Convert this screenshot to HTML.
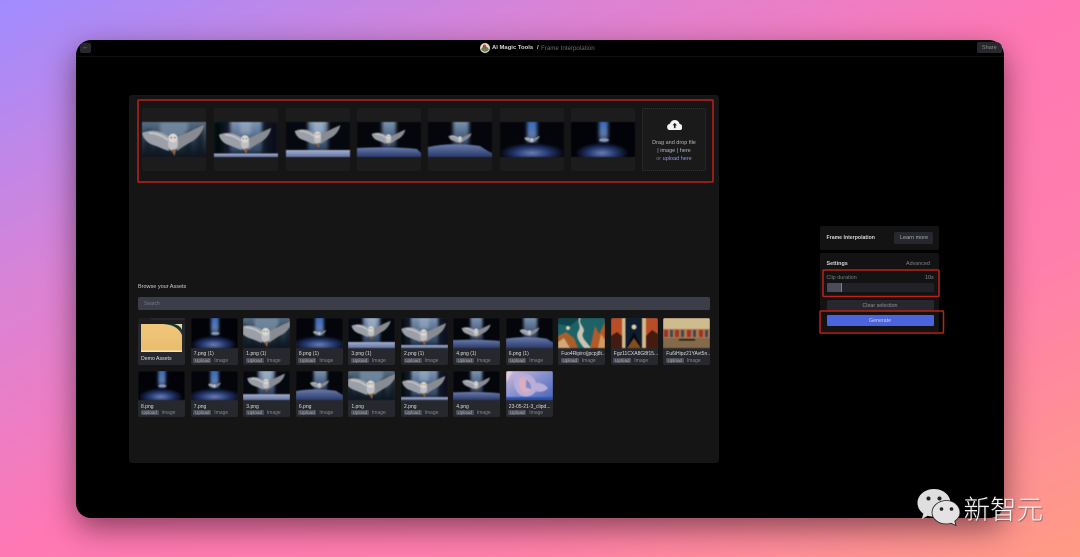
<!DOCTYPE html>
<html lang="zh">
<head>
<meta charset="utf-8">
<title>Frame Interpolation</title>
<style>
html,body{margin:0;padding:0}
body{width:1080px;height:557px;overflow:hidden;position:relative;font-family:"Liberation Sans","Noto Sans CJK SC",sans-serif;
background:linear-gradient(to bottom right,#a08cff 0,#d883d6 26%,#ff78b4 50%,#ff7fac 72%,#ff9c84 100%)}
div,span,svg{position:absolute;box-sizing:border-box}
.win{left:76px;top:40px;width:928px;height:478px;background:#000;border-radius:15px;box-shadow:0 10px 30px rgba(40,15,25,.55)}
.layer{left:0;top:0;width:1080px;height:557px;filter:blur(.3px)}
.t{white-space:nowrap;line-height:1;margin-top:1px}
.f{background:#1c1c1d;border-radius:2px;top:108px;width:64px;height:63px}
.f svg{left:0;top:14px;width:64px;height:35px;filter:blur(.6px) brightness(.92)}
.a{width:47px;height:47px;background:#26282d;border-radius:2px;overflow:hidden}
.a.r2{height:46px}
.a svg{left:0;top:0;width:47px;height:30px;filter:blur(.5px) brightness(.92)}
.a.r2 svg{height:29px}
.n{left:3px;top:32.5px;margin-top:1px;font-size:5px;color:#dcdde0;white-space:nowrap;line-height:1}
.u{left:2.5px;top:39.5px;width:18px;height:5px;border-radius:1px;background:#4b4e56;color:#a8aab0;font-size:4.6px;line-height:5px;text-align:center}
.a.r2 .u{top:38.8px}
.i{left:23.5px;top:40.500px;font-size:5px;color:#83858b;line-height:1}
.a.r2 .i{top:39.800px}
</style>
</head>
<body>
<svg width="0" height="0" style="left:0;top:0">
<defs>
<filter id="b2" x="-40%" y="-40%" width="180%" height="180%"><feGaussianBlur stdDeviation="1.600"/></filter>
<linearGradient id="col" x1="0" y1="0" x2="0" y2="1"><stop offset="0" stop-color="#93aed0"/><stop offset="1" stop-color="#2e4364"/></linearGradient>
<linearGradient id="colb" x1="0" y1="0" x2="0" y2="1"><stop offset="0" stop-color="#2f6ed8"/><stop offset=".6" stop-color="#6688bf"/><stop offset="1" stop-color="#1a2c4e"/></linearGradient>
<linearGradient id="snow" x1="0" y1="0" x2="0" y2="1"><stop offset="0" stop-color="#b4c0e0"/><stop offset="1" stop-color="#6b7cb2"/></linearGradient>
<linearGradient id="snow2" x1="0" y1="0" x2="0" y2="1"><stop offset="0" stop-color="#7486b8"/><stop offset="1" stop-color="#2c3f76"/></linearGradient>
<linearGradient id="bg1" x1="0" y1="0" x2="0" y2="1"><stop offset="0" stop-color="#5d778f"/><stop offset=".55" stop-color="#2a3c4e"/><stop offset="1" stop-color="#0f1723"/></linearGradient>
<radialGradient id="glow" cx=".5" cy=".5" r=".5"><stop offset="0" stop-color="#7488c0"/><stop offset=".55" stop-color="#253a78"/><stop offset="1" stop-color="#05080f"/></radialGradient>
<linearGradient id="fold" x1="0" y1="0" x2="0" y2="1"><stop offset="0" stop-color="#f0c67c"/><stop offset="1" stop-color="#e8bd6b"/></linearGradient>
<linearGradient id="fishbg" x1="0" y1="0" x2="1" y2="1"><stop offset="0" stop-color="#e5cdee"/><stop offset=".5" stop-color="#8f9ae0"/><stop offset="1" stop-color="#4a6cc8"/></linearGradient>

<symbol id="owl" viewBox="-32 -17 64 35" overflow="visible">
<path d="M-3 -2C-10 -7 -20 -11 -31 -6C-30 -1 -26 4 -20 6C-14 8 -8 11 -4 12Z" fill="#a9adb5"/>
<path d="M3 -2C10 -3 20 -10 31 -14C30 -8 26 -2 20 2C14 5 8 9 4 12Z" fill="#94989f"/>
<path d="M-24 -6C-17 -6 -10 -3 -5 1" stroke="#d6d8dc" stroke-width="2" fill="none"/>
<ellipse cx="0" cy="4" rx="5" ry="8.500" fill="#cfd1d7"/>
<path d="M-2 11L1.500 17L3.500 10Z" fill="#9a6a48"/>
<circle cx="0" cy="-1" r="4.500" fill="#ebecee"/>
<circle cx="-1.800" cy="-1.400" r=".9" fill="#b9842c"/><circle cx="1.800" cy="-1.400" r=".9" fill="#b9842c"/>
</symbol>

<symbol id="f1" viewBox="0 0 64 35" preserveAspectRatio="xMidYMid slice">
<rect width="64" height="35" fill="url(#bg1)"/>
<rect x="18" width="28" height="16" fill="#8aa3bc" opacity=".7" filter="url(#b2)"/>
<g fill="#0c131d" opacity=".6" filter="url(#b2)"><rect x="4" y="8" width="5" height="27"/><rect x="14" y="14" width="4" height="21"/><rect x="44" y="10" width="4" height="25"/><rect x="55" y="6" width="6" height="29"/></g>
<use href="#owl" x="-1" y="0" width="64" height="35"/>
</symbol>
<symbol id="f2" viewBox="0 0 64 35" preserveAspectRatio="xMidYMid slice">
<rect width="64" height="35" fill="#111927"/>
<rect x="16" y="-4" width="32" height="35" fill="url(#col)" filter="url(#b2)"/>
<rect width="8" height="32" fill="#06080e" filter="url(#b2)"/><rect x="56" width="8" height="32" fill="#0b101a" filter="url(#b2)"/>
<rect x="26" y="-3" width="11" height="15" fill="#b4c6df" opacity=".5" filter="url(#b2)"/>
<rect y="31.500" width="64" height="3.500" fill="url(#snow)"/>
<use href="#owl" x="4" y="3.500" width="54" height="29.500"/>
</symbol>
<symbol id="f3" viewBox="0 0 64 35" preserveAspectRatio="xMidYMid slice">
<rect width="64" height="35" fill="#060910"/>
<rect x="22" y="-4" width="20" height="33" fill="url(#col)" filter="url(#b2)"/>
<rect x="27" y="-3" width="11" height="15" fill="#c0d2e8" opacity=".6" filter="url(#b2)"/>
<rect y="28" width="64" height="7" fill="url(#snow)"/>
<use href="#owl" x="8" y="1" width="47" height="25.700"/>
</symbol>
<symbol id="f4" viewBox="0 0 64 35" preserveAspectRatio="xMidYMid slice">
<rect width="64" height="35" fill="#04070c"/>
<rect x="25" y="-4" width="14" height="30" fill="url(#col)" filter="url(#b2)"/>
<path d="M0 26C20 25 45 25 60 27L64 31V35H0Z" fill="url(#snow2)"/>
<use href="#owl" x="14" y="6" width="35" height="19"/>
</symbol>
<symbol id="f5" viewBox="0 0 64 35" preserveAspectRatio="xMidYMid slice">
<rect width="64" height="35" fill="#04060c"/>
<rect x="25" y="-4" width="16" height="28" fill="url(#col)" filter="url(#b2)"/>
<path d="M0 25C18 21 38 22 52 24L60 29L64 31V35H0Z" fill="url(#snow2)"/>
<use href="#owl" x="20" y="10" width="24" height="13"/>
</symbol>
<symbol id="f6" viewBox="0 0 64 35" preserveAspectRatio="xMidYMid slice">
<rect width="64" height="35" fill="#03050b"/>
<rect x="27" y="-4" width="10" height="28" fill="url(#colb)" filter="url(#b2)"/>
<ellipse cx="32" cy="31" rx="32" ry="10" fill="url(#glow)"/>
<use href="#owl" x="24" y="13" width="16" height="9"/>
</symbol>
<symbol id="f7" viewBox="0 0 64 35" preserveAspectRatio="xMidYMid slice">
<rect width="64" height="35" fill="#02030a"/>
<rect x="28" y="-4" width="9" height="26" fill="url(#colb)" filter="url(#b2)"/>
<ellipse cx="31" cy="31" rx="26" ry="10" fill="url(#glow)"/>
<ellipse cx="33" cy="18" rx="5" ry="1.800" fill="#96a5be"/>
</symbol>

<symbol id="folder" viewBox="0 0 47 47" preserveAspectRatio="none">
<rect width="47" height="47" fill="#26282d"/>
<path d="M0 0H12L14 2H47V6H0Z" fill="#1d1e21"/>
<rect x="3" y="6" width="41" height="28" fill="url(#fold)"/>
<path d="M25 6C35 6.500 41 10 44 17V6Z" fill="#123a34"/>
<path d="M36 6C40 7 43 9 44 12V6Z" fill="#e9d9a8"/>
<rect x="3" y="32.500" width="41" height="1.500" fill="#f6e4b8"/>
</symbol>
<symbol id="art1" viewBox="0 0 47 30" preserveAspectRatio="none">
<rect width="47" height="30" fill="#1f6a70"/>
<path d="M0 0H22L12 8L0 6Z" fill="#0f4a52"/>
<path d="M0 18L8 14L16 20L20 30H0Z" fill="#b8672e"/>
<path d="M0 24L6 20L12 30H0Z" fill="#e6b57e"/>
<path d="M32 30L37 8L41 16L47 4V30Z" fill="#c2632c"/>
<path d="M40 30L43 16L47 22V30Z" fill="#e6a76a"/>
<path d="M23 0C19 6 29 10 25 15C23 20 29 24 33 30L26 30C20 22 17 18 21 12C23 7 19 4 21 0Z" fill="#d9d6bf"/>
<circle cx="10" cy="10" r="2" fill="#eee0b6"/>
</symbol>
<symbol id="art2" viewBox="0 0 47 30" preserveAspectRatio="none">
<rect width="47" height="30" fill="#c9542a"/>
<path d="M0 30V18L6 14L11 18V30Z" fill="#4a1d12"/>
<path d="M35 30V18L41 12L47 16V30Z" fill="#4a1d12"/>
<rect x="14" width="18" height="30" fill="#101f35"/>
<path d="M15 30L23 14L31 30Z" fill="#090a10"/>
<path d="M16 30L23 20L30 30Z" fill="#c9742e" opacity=".7"/>
<circle cx="23" cy="9" r="2.500" fill="#efdfae"/>
<rect x="11" width="3.500" height="30" fill="#e3c998"/><rect x="31" width="4" height="30" fill="#e3c998"/>
</symbol>
<symbol id="art3" viewBox="0 0 47 30" preserveAspectRatio="none">
<rect width="47" height="30" fill="#e0cb9a"/>
<rect y="11" width="47" height="9" fill="#c48050"/>
<g fill="#a6392a"><rect x="1" y="12" width="4" height="7"/><rect x="12" y="12" width="4" height="7"/><rect x="24" y="12" width="4" height="7"/><rect x="36" y="12" width="4" height="7"/></g>
<g fill="#37526a"><rect x="7" y="12" width="3" height="7"/><rect x="18" y="12" width="3" height="7"/><rect x="30" y="12" width="3" height="7"/><rect x="42" y="12" width="3" height="7"/></g>
<rect y="20" width="47" height="10" fill="#8e7352"/>
<rect x="16" y="21" width="16" height="1.600" fill="#2c2018"/>
</symbol>
<symbol id="fish" viewBox="0 0 47 30" preserveAspectRatio="none">
<rect width="47" height="30" fill="url(#fishbg)"/>
<path d="M10 4C18 0 28 4 30 12C35 12 40 14 42 18C38 22 34 22 30 21C26 27 18 28 13 24C8 18 6 10 10 4Z" fill="#c9bdec"/>
<path d="M14 7C20 5 25 9 26 15C27 20 22 24 17 22C13 18 12 12 14 7Z" fill="#eebdd2"/>
<path d="M20 9C23 10 26 14 25 19L20 17Z" fill="#8597e4"/>
<path d="M0 0H7L0 12Z" fill="#f4dff2"/>
<rect y="27" width="47" height="3" fill="#2f59bc"/>
</symbol>
</defs>
</svg>

<div class="win"></div>
<div class="layer">
  <div style="left:76px;top:55.500px;width:928px;height:1px;background:#0e0e0f"></div>
  <div style="left:80px;top:42.500px;width:10.500px;height:10.500px;background:#26282c;border-radius:4px 2px 2px 2px"></div>
  <div class="t" style="left:82px;top:43.500px;font-size:6.500px;color:#8a8c90">←</div>
  <svg style="left:480px;top:43px;width:10px;height:10px" viewBox="0 0 9 9"><circle cx="4.500" cy="4.500" r="4.500" fill="#e6dccb"/><path d="M1 6C2 2 7 2 8 6C6 8.500 3 8.500 1 6Z" fill="#6b7a54"/><circle cx="4" cy="3" r="1.500" fill="#b34a30"/></svg>
  <div class="t" style="left:492px;top:44.500px;font-size:5.900px;font-weight:700;color:#d6d7d9">AI Magic Tools</div>
  <div class="t" style="left:537px;top:44.500px;font-size:5.900px;font-weight:700;color:#d6d7d9">/</div>
  <div class="t" style="left:541px;top:44.500px;font-size:6.200px;color:#6a6c70">Frame Interpolation</div>
  <div style="left:977px;top:42px;width:25px;height:11px;background:#26282c;border-radius:2px 6px 2px 2px"></div>
  <div class="t" style="left:982px;top:44.700px;font-size:5.500px;color:#8a8c91">Share</div>

  <div style="left:129px;top:95px;width:590px;height:368px;background:#151516;border-radius:3px"></div>

  <div class="f" style="left:142px"><svg><use href="#f1"/></svg></div>
  <div class="f" style="left:214px"><svg><use href="#f2"/></svg></div>
  <div class="f" style="left:285.500px"><svg><use href="#f3"/></svg></div>
  <div class="f" style="left:357px"><svg><use href="#f4"/></svg></div>
  <div class="f" style="left:428px"><svg><use href="#f5"/></svg></div>
  <div class="f" style="left:499.500px"><svg><use href="#f6"/></svg></div>
  <div class="f" style="left:571px"><svg><use href="#f7"/></svg></div>

  <div style="left:642px;top:108px;width:64px;height:63px;background:#1a1a1b;border:1px dotted #303032;border-radius:1px"></div>
  <svg style="left:666.500px;top:119.500px;width:15.500px;height:10.500px" viewBox="0 0 16 11"><path d="M4 11C1.500 11 0 9.300 0 7.300C0 5.500 1.200 4.200 3 3.900C3.700 1.600 5.700 0 8 0C10.500 0 12.500 1.700 13 4C14.800 4.300 16 5.600 16 7.400C16 9.400 14.500 11 12.300 11Z" fill="#f2f2f2"/><path d="M8 3L5.700 5.600H7.200V8.500H8.800V5.600H10.300Z" fill="#1a1a1b"/></svg>
  <div class="t" style="left:642px;top:140.200px;width:64px;text-align:center;font-size:5.500px;color:#b8b9bc">Drag and drop file</div>
  <div class="t" style="left:642px;top:147.500px;width:64px;text-align:center;font-size:5.500px;color:#b8b9bc">| image | here</div>
  <div class="t" style="left:642px;top:156.200px;width:64px;text-align:center;font-size:5.500px;color:#7b7d82">or <span style="position:static;color:#8f99ea">upload here</span></div>

  <div class="t" style="left:138px;top:284.300px;font-size:5.500px;color:#cccdd0">Browse your Assets</div>
  <div style="left:138px;top:297px;width:572px;height:13px;background:#3b3e49;border-radius:2px"></div>
  <div class="t" style="left:144px;top:300.800px;font-size:5px;color:#777a83">Search</div>

  <!-- row 1 -->
  <div class="a" style="left:138px;top:318px"><svg style="height:47px;filter:none"><use href="#folder"/></svg><div class="n" style="top:38.400px;font-size:5.200px">Demo Assets</div></div>
  <div class="a" style="left:190.800px;top:318px"><svg><use href="#f7"/></svg><div class="n">7.png (1)</div><div class="u">Upload</div><div class="i">Image</div></div>
  <div class="a" style="left:243.300px;top:318px"><svg><use href="#f1"/></svg><div class="n">1.png (1)</div><div class="u">Upload</div><div class="i">Image</div></div>
  <div class="a" style="left:295.900px;top:318px"><svg><use href="#f6"/></svg><div class="n">8.png (1)</div><div class="u">Upload</div><div class="i">Image</div></div>
  <div class="a" style="left:348.400px;top:318px"><svg><use href="#f3"/></svg><div class="n">3.png (1)</div><div class="u">Upload</div><div class="i">Image</div></div>
  <div class="a" style="left:401px;top:318px"><svg><use href="#f2"/></svg><div class="n">2.png (1)</div><div class="u">Upload</div><div class="i">Image</div></div>
  <div class="a" style="left:453.300px;top:318px"><svg><use href="#f4"/></svg><div class="n">4.png (1)</div><div class="u">Upload</div><div class="i">Image</div></div>
  <div class="a" style="left:505.800px;top:318px"><svg><use href="#f5"/></svg><div class="n">6.png (1)</div><div class="u">Upload</div><div class="i">Image</div></div>
  <div class="a" style="left:558.300px;top:318px"><svg><use href="#art1"/></svg><div class="n">Fuo4Ripiro(jpcpj8t...</div><div class="u">Upload</div><div class="i">Image</div></div>
  <div class="a" style="left:610.800px;top:318px"><svg><use href="#art2"/></svg><div class="n">Fgz11CXA8G8f15...</div><div class="u">Upload</div><div class="i">Image</div></div>
  <div class="a" style="left:663.300px;top:318px"><svg><use href="#art3"/></svg><div class="n">Fu6iHipz21YAvt5n...</div><div class="u">Upload</div><div class="i">Image</div></div>

  <!-- row 2 -->
  <div class="a r2" style="left:138px;top:371px"><svg><use href="#f7"/></svg><div class="n">8.png</div><div class="u">Upload</div><div class="i">Image</div></div>
  <div class="a r2" style="left:190.800px;top:371px"><svg><use href="#f6"/></svg><div class="n">7.png</div><div class="u">Upload</div><div class="i">Image</div></div>
  <div class="a r2" style="left:243.300px;top:371px"><svg><use href="#f3"/></svg><div class="n">3.png</div><div class="u">Upload</div><div class="i">Image</div></div>
  <div class="a r2" style="left:295.900px;top:371px"><svg><use href="#f5"/></svg><div class="n">6.png</div><div class="u">Upload</div><div class="i">Image</div></div>
  <div class="a r2" style="left:348.400px;top:371px"><svg><use href="#f1"/></svg><div class="n">1.png</div><div class="u">Upload</div><div class="i">Image</div></div>
  <div class="a r2" style="left:401px;top:371px"><svg><use href="#f2"/></svg><div class="n">2.png</div><div class="u">Upload</div><div class="i">Image</div></div>
  <div class="a r2" style="left:453.300px;top:371px"><svg><use href="#f4"/></svg><div class="n">4.png</div><div class="u">Upload</div><div class="i">Image</div></div>
  <div class="a r2" style="left:505.800px;top:371px"><svg><use href="#fish"/></svg><div class="n">23-05-21-3_clipd...</div><div class="u">Upload</div><div class="i">Image</div></div>

  <!-- right panel -->
  <div style="left:820px;top:226px;width:119px;height:24px;background:#131314;border-radius:2px"></div>
  <div class="t" style="left:826.500px;top:235.100px;font-size:5.200px;font-weight:700;color:#d4d5d7">Frame Interpolation</div>
  <div style="left:894px;top:232px;width:39px;height:12px;background:#26282d;border-radius:2px"></div>
  <div class="t" style="left:900px;top:235.200px;font-size:5.500px;color:#a8aaae">Learn more</div>

  <div style="left:820px;top:253px;width:119px;height:79px;background:#131314;border-radius:2px"></div>
  <div class="t" style="left:826.500px;top:261px;font-size:5.400px;font-weight:700;color:#d4d5d7">Settings</div>
  <div class="t" style="left:906px;top:261px;font-size:5.400px;color:#7f8186">Advanced</div>
  <div class="t" style="left:826.500px;top:275.300px;font-size:5.400px;color:#7a7c81">Clip duration</div>
  <div class="t" style="left:925px;top:275.300px;font-size:5.400px;color:#8a8c91">10s</div>
  <div style="left:826.500px;top:283px;width:107px;height:9px;background:#202227;border-radius:1px"></div>
  <div style="left:826.500px;top:283px;width:15.500px;height:9px;background:#4a4d59;border-radius:1px"></div>
  <div style="left:840.500px;top:283px;width:1.500px;height:9px;background:#7e818b"></div>

  <div style="left:826.500px;top:300px;width:107px;height:11px;background:#26282d;border-radius:2px"></div>
  <div class="t" style="left:826.500px;top:303.100px;width:107px;text-align:center;font-size:5.300px;color:#8f9196">Clear selection</div>
  <div style="left:826.500px;top:315px;width:107px;height:11px;background:#4b63dd;border-radius:1px"></div>
  <div class="t" style="left:826.500px;top:317.700px;width:107px;text-align:center;font-size:5.300px;color:#cdd3f6">Generate</div>

  <!-- red annotation boxes -->
  <svg style="left:0;top:0;width:1080px;height:557px" viewBox="0 0 1080 557">
    <g fill="none" stroke="#bf201a" stroke-width="1.500">
      <rect x="138" y="100" width="575" height="82" rx="1"/>
      <rect x="823" y="270" width="116" height="26.500" rx="1"/>
      <rect x="820" y="311" width="123.500" height="22" rx="1"/>
    </g>
  </svg>
</div>

<!-- watermark -->
<svg style="left:916px;top:488px;width:45px;height:38px" viewBox="0 0 45 38">
<path d="M18 1C8.600 1 1.500 7.300 1.500 15C1.500 19.300 3.700 23 7.400 25.700L5.800 31L11.800 27.800C13.800 28.400 15.800 28.700 18 28.700C27.400 28.700 34.500 22.500 34.500 15C34.500 7.300 27.400 1 18 1Z" fill="#dfdfdf"/>
<circle cx="12.500" cy="10.500" r="2" fill="#222"/><circle cx="23.500" cy="10.500" r="2" fill="#222"/>
<path d="M30.500 12.500C22.500 12.500 16 18 16 24.500C16 31 22.500 36 30.500 36C32.200 36 33.800 35.800 35.200 35.300L40 37.500L38.800 33.200C41.800 31 44 28 44 24.500C44 18 38 12.500 30.500 12.500Z" fill="#e4e2e2" stroke="#1d1d1d" stroke-width=".8"/>
<circle cx="25.500" cy="21" r="1.800" fill="#222"/><circle cx="35.500" cy="21" r="1.800" fill="#222"/>
</svg>
<div class="t" style="left:963.500px;top:495.500px;font-size:26.500px;font-weight:300;color:#f6f6f6;text-shadow:1px 1px 1px rgba(60,60,60,.55)">新智元</div>
</body>
</html>
